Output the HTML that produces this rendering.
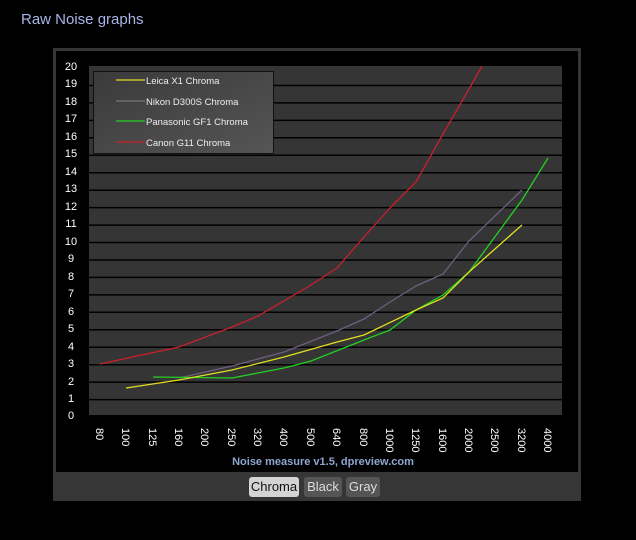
<!DOCTYPE html>
<html><head><style>
body{margin:0;background:#000;width:636px;height:540px;overflow:hidden;font-family:"Liberation Sans",sans-serif}
.t{position:absolute;left:21px;top:11px;color:#a9b4e8;font-size:15px}
.panel{position:absolute;left:53px;top:48px;width:528px;height:453px;background:#363636}
.inner{position:absolute;left:3px;top:3px;width:522px;height:421px;background:#000}
.bar{position:absolute;left:0;top:426px;width:528px;height:27px;background:#363636}
.b{position:absolute;top:3px;height:20px;line-height:20px;font-size:13px;color:#ddd;background:#555;border-radius:3px;text-align:center}
</style></head><body>
<div class="t">Raw Noise graphs</div>
<div class="panel"><div class="inner"></div>
<div class="bar">
<div class="b" style="left:196px;width:50px;background:#d4d4d4;color:#111">Chroma</div>
<div class="b" style="left:251px;width:38px">Black</div>
<div class="b" style="left:293px;width:34px">Gray</div>
</div></div>
<svg style="position:absolute;left:0;top:0" width="636" height="540">
<defs><linearGradient id="g" x1="0" y1="0" x2="1" y2="1"><stop offset="0" stop-color="#3a3a3a"/><stop offset="1" stop-color="#555"/></linearGradient></defs>
<rect x="89" y="66" width="473" height="349" fill="#353535"/>
<g stroke="#000" stroke-width="1.5">
<line x1="89" x2="562" y1="85.5" y2="85.5"/><line x1="89" x2="562" y1="102.9" y2="102.9"/><line x1="89" x2="562" y1="120.4" y2="120.4"/><line x1="89" x2="562" y1="137.8" y2="137.8"/><line x1="89" x2="562" y1="155.3" y2="155.3"/><line x1="89" x2="562" y1="172.7" y2="172.7"/><line x1="89" x2="562" y1="190.2" y2="190.2"/><line x1="89" x2="562" y1="207.6" y2="207.6"/><line x1="89" x2="562" y1="225.1" y2="225.1"/><line x1="89" x2="562" y1="242.5" y2="242.5"/><line x1="89" x2="562" y1="260" y2="260"/><line x1="89" x2="562" y1="277.4" y2="277.4"/><line x1="89" x2="562" y1="294.9" y2="294.9"/><line x1="89" x2="562" y1="312.3" y2="312.3"/><line x1="89" x2="562" y1="329.8" y2="329.8"/><line x1="89" x2="562" y1="347.2" y2="347.2"/><line x1="89" x2="562" y1="364.7" y2="364.7"/><line x1="89" x2="562" y1="382.1" y2="382.1"/><line x1="89" x2="562" y1="399.6" y2="399.6"/>
</g>
<g fill="none" stroke-width="1.3">
<polyline stroke="#c8202c" points="100,364 179,347 232,327 258,316 311,285 337,268 364,237 390,208 416,182 443,134 469,89 482,66"/>
<polyline stroke="#6e5f80" points="179,378 232,366 284,352 337,331 364,319 390,302 416,286 443,274 469,241 522,190"/>
<polyline stroke="#22d022" points="153,377 232,378 284,368 311,361 364,340 390,330 416,310 443,295 469,272 522,200 548,158"/>
<polyline stroke="#e0e020" points="126,388 179,380 232,370 284,357 337,342 364,335 416,310 443,298 469,272 522,225"/>
</g>
<rect x="93.5" y="71.5" width="180" height="82" fill="url(#g)" stroke="#111"/>
<g stroke-width="1.3"><line x1="116" x2="145" y1="80" y2="80" stroke="#e0e020"/><line x1="116" x2="145" y1="101" y2="101" stroke="#777"/><line x1="116" x2="145" y1="121" y2="121" stroke="#22d022"/><line x1="116" x2="145" y1="142" y2="142" stroke="#c8202c"/></g>
<g fill="#eee" font-size="9.5" font-family="Liberation Sans,sans-serif"><text x="146" y="84">Leica X1 Chroma</text><text x="146" y="105">Nikon D300S  Chroma</text><text x="146" y="125">Panasonic GF1 Chroma</text><text x="146" y="146">Canon G11 Chroma</text></g>
<g fill="#fff" font-size="11" text-anchor="middle" font-family="Liberation Sans,sans-serif">
<text x="71" y="70">20</text><text x="71" y="87">19</text><text x="71" y="105">18</text><text x="71" y="122">17</text><text x="71" y="140">16</text><text x="71" y="157">15</text><text x="71" y="175">14</text><text x="71" y="192">13</text><text x="71" y="210">12</text><text x="71" y="227">11</text><text x="71" y="245">10</text><text x="71" y="262">9</text><text x="71" y="280">8</text><text x="71" y="297">7</text><text x="71" y="315">6</text><text x="71" y="332">5</text><text x="71" y="350">4</text><text x="71" y="367">3</text><text x="71" y="385">2</text><text x="71" y="402">1</text><text x="71" y="419">0</text>
</g>
<g fill="#fff" font-size="11" font-family="Liberation Sans,sans-serif">
<text transform="translate(96,428) rotate(90)">80</text><text transform="translate(122,428) rotate(90)">100</text><text transform="translate(149,428) rotate(90)">125</text><text transform="translate(175,428) rotate(90)">160</text><text transform="translate(201,428) rotate(90)">200</text><text transform="translate(228,428) rotate(90)">250</text><text transform="translate(254,428) rotate(90)">320</text><text transform="translate(280,428) rotate(90)">400</text><text transform="translate(307,428) rotate(90)">500</text><text transform="translate(333,428) rotate(90)">640</text><text transform="translate(360,428) rotate(90)">800</text><text transform="translate(386,428) rotate(90)">1000</text><text transform="translate(412,428) rotate(90)">1250</text><text transform="translate(439,428) rotate(90)">1600</text><text transform="translate(465,428) rotate(90)">2000</text><text transform="translate(491,428) rotate(90)">2500</text><text transform="translate(518,428) rotate(90)">3200</text><text transform="translate(544,428) rotate(90)">4000</text>
</g>
<text x="323" y="465" fill="#8fa6d0" font-size="11" font-weight="bold" text-anchor="middle" font-family="Liberation Sans,sans-serif">Noise measure v1.5, dpreview.com</text>
</svg>
</body></html>
